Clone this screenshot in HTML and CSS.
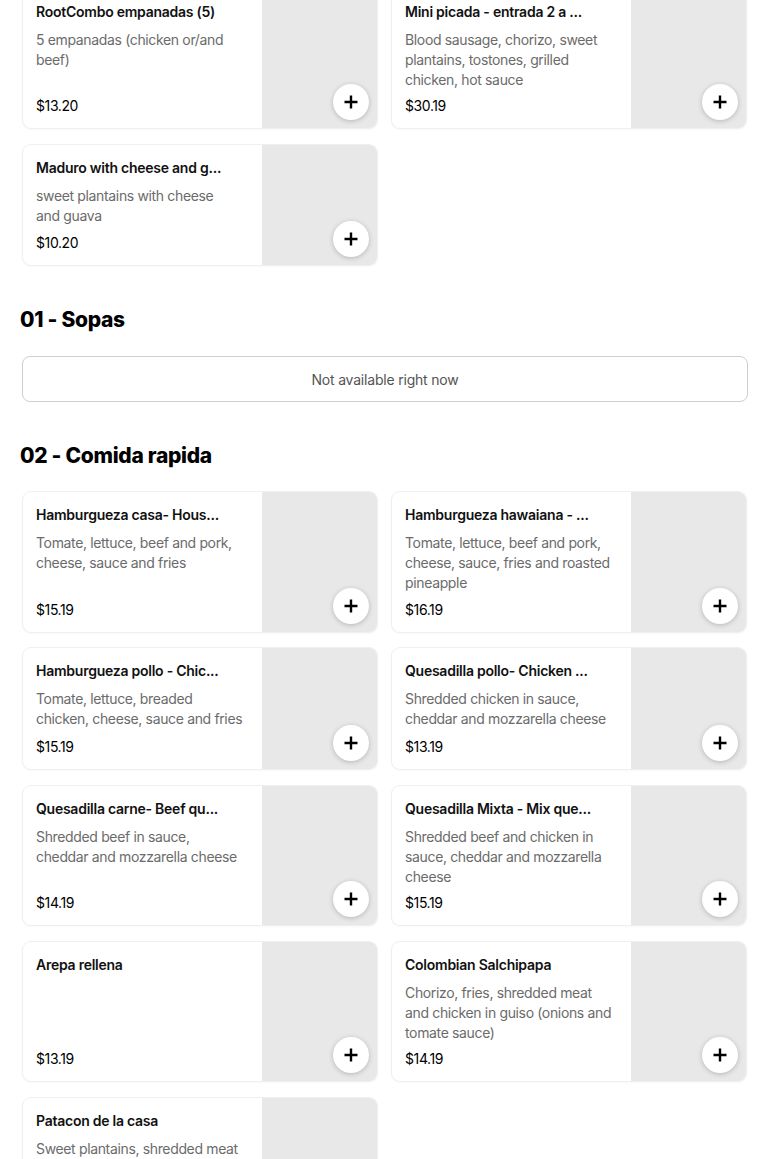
FILE: index.html
```html
<!DOCTYPE html>
<html>
<head>
<meta charset="utf-8">
<link rel="stylesheet" href="styles.css">
</head>
<body>
<main class="menu">
  <section class="section first">
    <div class="grid">
      <div class="card">
        <div class="info">
          <div class="title">RootCombo empanadas (5)</div>
          <div class="desc">5 empanadas (chicken or/and beef)</div>
          <div class="price">$13.20</div>
        </div>
        <div class="thumb"><button class="add"><svg viewBox="0 0 16 16" width="16" height="16"><path d="M8 1.5v13M1.5 8h13" stroke="#000" stroke-width="2.4" fill="none"/></svg></button></div>
      </div>
      <div class="card">
        <div class="info">
          <div class="title">Mini picada - entrada 2 a ...</div>
          <div class="desc">Blood sausage, chorizo, sweet plantains, tostones, grilled chicken, hot sauce</div>
          <div class="price">$30.19</div>
        </div>
        <div class="thumb"><button class="add"><svg viewBox="0 0 16 16" width="16" height="16"><path d="M8 1.5v13M1.5 8h13" stroke="#000" stroke-width="2.4" fill="none"/></svg></button></div>
      </div>
      <div class="card">
        <div class="info">
          <div class="title">Maduro with cheese and g...</div>
          <div class="desc">sweet plantains with cheese<br>and guava</div>
          <div class="price">$10.20</div>
        </div>
        <div class="thumb"><button class="add"><svg viewBox="0 0 16 16" width="16" height="16"><path d="M8 1.5v13M1.5 8h13" stroke="#000" stroke-width="2.4" fill="none"/></svg></button></div>
      </div>
    </div>
  </section>

  <section class="section">
    <h2 class="heading">01 - Sopas</h2>
    <div class="unavailable">Not available right now</div>
  </section>

  <section class="section">
    <h2 class="heading">02 - Comida rapida</h2>
    <div class="grid">
      <div class="card">
        <div class="info">
          <div class="title">Hamburgueza casa- Hous...</div>
          <div class="desc">Tomate, lettuce, beef and pork, cheese, sauce and fries</div>
          <div class="price">$15.19</div>
        </div>
        <div class="thumb"><button class="add"><svg viewBox="0 0 16 16" width="16" height="16"><path d="M8 1.5v13M1.5 8h13" stroke="#000" stroke-width="2.4" fill="none"/></svg></button></div>
      </div>
      <div class="card">
        <div class="info">
          <div class="title">Hamburgueza hawaiana - ...</div>
          <div class="desc">Tomate, lettuce, beef and pork, cheese, sauce, fries and roasted pineapple</div>
          <div class="price">$16.19</div>
        </div>
        <div class="thumb"><button class="add"><svg viewBox="0 0 16 16" width="16" height="16"><path d="M8 1.5v13M1.5 8h13" stroke="#000" stroke-width="2.4" fill="none"/></svg></button></div>
      </div>
      <div class="card">
        <div class="info">
          <div class="title">Hamburgueza pollo - Chic...</div>
          <div class="desc">Tomate, lettuce, breaded chicken, cheese, sauce and fries</div>
          <div class="price">$15.19</div>
        </div>
        <div class="thumb"><button class="add"><svg viewBox="0 0 16 16" width="16" height="16"><path d="M8 1.5v13M1.5 8h13" stroke="#000" stroke-width="2.4" fill="none"/></svg></button></div>
      </div>
      <div class="card">
        <div class="info">
          <div class="title">Quesadilla pollo- Chicken ...</div>
          <div class="desc">Shredded chicken in sauce, cheddar and mozzarella cheese</div>
          <div class="price">$13.19</div>
        </div>
        <div class="thumb"><button class="add"><svg viewBox="0 0 16 16" width="16" height="16"><path d="M8 1.5v13M1.5 8h13" stroke="#000" stroke-width="2.4" fill="none"/></svg></button></div>
      </div>
      <div class="card">
        <div class="info">
          <div class="title">Quesadilla carne- Beef qu...</div>
          <div class="desc">Shredded beef in sauce, cheddar and mozzarella cheese</div>
          <div class="price">$14.19</div>
        </div>
        <div class="thumb"><button class="add"><svg viewBox="0 0 16 16" width="16" height="16"><path d="M8 1.5v13M1.5 8h13" stroke="#000" stroke-width="2.4" fill="none"/></svg></button></div>
      </div>
      <div class="card">
        <div class="info">
          <div class="title">Quesadilla Mixta - Mix que...</div>
          <div class="desc">Shredded beef and chicken in sauce, cheddar and mozzarella cheese</div>
          <div class="price">$15.19</div>
        </div>
        <div class="thumb"><button class="add"><svg viewBox="0 0 16 16" width="16" height="16"><path d="M8 1.5v13M1.5 8h13" stroke="#000" stroke-width="2.4" fill="none"/></svg></button></div>
      </div>
      <div class="card">
        <div class="info">
          <div class="title">Arepa rellena</div>
          <div class="desc"></div>
          <div class="price">$13.19</div>
        </div>
        <div class="thumb"><button class="add"><svg viewBox="0 0 16 16" width="16" height="16"><path d="M8 1.5v13M1.5 8h13" stroke="#000" stroke-width="2.4" fill="none"/></svg></button></div>
      </div>
      <div class="card">
        <div class="info">
          <div class="title">Colombian Salchipapa</div>
          <div class="desc">Chorizo, fries, shredded meat and chicken in guiso (onions and tomate sauce)</div>
          <div class="price">$14.19</div>
        </div>
        <div class="thumb"><button class="add"><svg viewBox="0 0 16 16" width="16" height="16"><path d="M8 1.5v13M1.5 8h13" stroke="#000" stroke-width="2.4" fill="none"/></svg></button></div>
      </div>
      <div class="card">
        <div class="info">
          <div class="title">Patacon de la casa</div>
          <div class="desc">Sweet plantains, shredded meat and chicken, cheese and sauces</div>
          <div class="price">$14.19</div>
        </div>
        <div class="thumb"><button class="add"><svg viewBox="0 0 16 16" width="16" height="16"><path d="M8 1.5v13M1.5 8h13" stroke="#000" stroke-width="2.4" fill="none"/></svg></button></div>
      </div>
    </div>
  </section>
</main>
</body>
</html>
```

FILE: styles.css
```css
* { box-sizing: border-box; }
html, body { margin: 0; padding: 0; background: #fff; }
body {
  font-family: Inter, "Noto Sans", "Liberation Sans", sans-serif;
  color: #000;
  overflow: hidden;
}
.menu {
  padding: 0 22px;
  display: flex;
  flex-direction: column;
  gap: 40px;
}
.section.first { margin-top: -11.5px; margin-bottom: 1px; }
.heading {
  margin: 0 0 22px -2px;
  font-size: 21px;
  line-height: 28px;
  font-weight: 800;
  letter-spacing: -0.3px;
  color: #000;
}
.heading + .grid { margin-top: 1.5px; }
.unavailable {
  height: 46px;
  border: 1px solid #cfcfcf;
  border-radius: 8px;
  display: flex;
  align-items: center;
  justify-content: center;
  font-size: 14px;
  color: #545454;
  letter-spacing: -0.2px;
}
.grid {
  display: grid;
  grid-template-columns: 1fr 1fr;
  column-gap: 15px;
  row-gap: 16.6px;
  padding: 0 2px 0 1px;
}
.card {
  display: grid;
  grid-template-columns: 1fr 115px;
  border-radius: 8px;
  background: #fff;
  box-shadow: 0 0 0 1px #efefef, 0 1px 3px rgba(0,0,0,0.06);
  overflow: hidden;
  min-height: 120.6px;
}
.info {
  display: flex;
  flex-direction: column;
  padding: 13px 12px 12px 13px;
  min-width: 0;
}
.title {
  font-size: 14px;
  line-height: 20px;
  font-weight: 600;
  letter-spacing: -0.25px;
  white-space: nowrap;
  overflow: hidden;
  color: #111;
}
.desc {
  margin-top: 8px;
  max-width: 208px;
  font-size: 14px;
  line-height: 20px;
  color: #6b6b6b;
  letter-spacing: -0.35px;
}
.price {
  margin-top: auto;
  padding-top: 6.6px;
  font-size: 14px;
  line-height: 20px;
  letter-spacing: -0.4px;
  color: #000;
}
.thumb {
  position: relative;
  background: #e8e8e8;
}
.add {
  position: absolute;
  right: 8px;
  bottom: 8px;
  width: 36px;
  height: 36px;
  border-radius: 50%;
  border: none;
  background: #fff;
  box-shadow: 0 1px 5px rgba(0,0,0,0.22);
  display: flex;
  align-items: center;
  justify-content: center;
  padding: 0;
}
.add svg { display: block; }
```
